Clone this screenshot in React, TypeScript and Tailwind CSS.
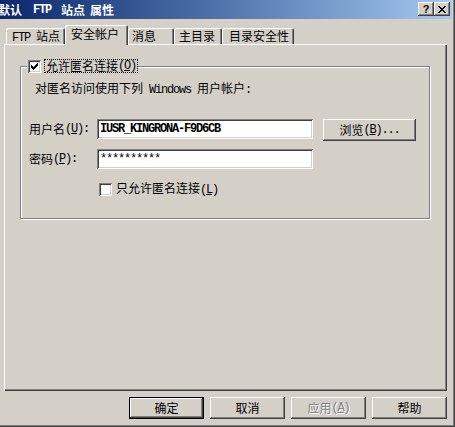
import clsx from 'clsx'
import type { ReactNode } from 'react'

const cjk = "font-['Noto_Sans_CJK_SC',sans-serif]"
const mono = "font-['Liberation_Mono','Noto_Sans_CJK_SC',monospace] text-[12px] tracking-[-1.2px]"
const raised =
  'shadow-[inset_-1px_-1px_0_#404040,inset_1px_1px_0_#ffffff,inset_-2px_-2px_0_#808080,inset_2px_2px_0_#d4d0c8]'
const sunken =
  'shadow-[inset_1px_1px_0_#808080,inset_-1px_-1px_0_#ffffff,inset_2px_2px_0_#404040,inset_-2px_-2px_0_#d4d0c8]'

// latin runs use a 6px monospace like the old bitmap font
const L = ({ children, className }: { children: ReactNode; className?: string }) => (
  <span className={clsx(mono, className)}>{children}</span>
)

const CHECK = [
  [2, 3],
  [3, 3],
  [4, 3],
  [3, 3],
  [2, 3],
  [1, 3],
  [0, 3],
]

const CLOSE = ['11000011', '01100110', '00111100', '00011000', '00111100', '01100110', '11000011']

function Check({ checked }: { checked?: boolean }) {
  return (
    <span className={clsx('flex h-[13px] w-[13px] shrink-0 bg-white', sunken)}>
      {checked && (
        <svg width="13" height="13" shapeRendering="crispEdges">
          {CHECK.map(([y, h], i) => (
            <rect key={i} x={3 + i} y={3 + y} width="1" height={h} fill="#000" />
          ))}
        </svg>
      )}
    </span>
  )
}

function Btn({
  children,
  def,
  disabled,
  className,
}: {
  children: ReactNode
  def?: boolean
  disabled?: boolean
  className?: string
}) {
  return (
    <div
      className={clsx(
        'flex h-[22px] w-[75px] shrink-0 items-center justify-center bg-[#d4d0c8]',
        raised,
        def && 'border border-black',
        disabled && 'text-[#808080] [text-shadow:1px_1px_0_#ffffff]',
        className,
      )}
    >
      {children}
    </div>
  )
}

function CapBtn({ children }: { children: ReactNode }) {
  return (
    <div className={clsx('flex h-[14px] w-[16px] items-center justify-center bg-[#d4d0c8] text-black', raised)}>
      {children}
    </div>
  )
}

function Tab({ label, w, pl, active }: { label: ReactNode; w: number; pl: number; active?: boolean }) {
  return (
    <div
      style={{ width: w, paddingLeft: pl }}
      className={clsx(
        'flex shrink-0 items-start rounded-t-[2px] bg-[#d4d0c8] shadow-[inset_1px_1px_0_#ffffff,inset_-1px_0_0_#404040,inset_-2px_0_0_#808080]',
        active ? 'relative z-10 -mb-[1px] h-[20px] pt-[3px]' : 'h-[16px] pt-[2px]',
      )}
    >
      {label}
    </div>
  )
}

export default function App() {
  return (
    <div
      className={clsx(
        'flex h-[427px] w-[455px] flex-col overflow-hidden bg-[#d4d0c8] text-[12px] leading-[12px] text-black shadow-[inset_-1px_-1px_0_#404040,inset_-2px_-2px_0_#808080]',
        cjk,
      )}
    >
      {/* Title bar */}
      <div className="mr-[3px] flex h-[19px] shrink-0 items-center bg-linear-to-r from-[#0c266c] to-[#a6caf0] pr-[2px] font-bold text-white">
        <span className="-ml-[2px]">默认</span>
        <L className="ml-[11px] font-bold">FTP</L>
        <span className="ml-[10px]">站点</span>
        <span className="ml-[5px]">属性</span>
        <div className="ml-auto flex self-start pt-[2px]">
          <CapBtn>
            <span className="font-['Liberation_Sans',sans-serif] text-[11px] leading-[11px] font-bold">?</span>
          </CapBtn>
          <CapBtn>
            <svg width="8" height="7" shapeRendering="crispEdges">
              {CLOSE.map((row, y) =>
                row
                  .split('')
                  .map((c, x) => (c === '1' ? <rect key={`${x}-${y}`} x={x} y={y} width="1" height="1" fill="#000" /> : null)),
              )}
            </svg>
          </CapBtn>
        </div>
      </div>

      {/* Tabs */}
      <div className="flex h-[25px] shrink-0 items-end pl-[6px]">
        <Tab
          w={59}
          pl={6}
          label={
            <span>
              <L>FTP </L>站点
            </span>
          }
        />
        <Tab w={63} pl={6} active label="安全帐户" />
        <Tab w={46} pl={4} label="消息" />
        <Tab w={48} pl={5} label="主目录" />
        <Tab w={72} pl={7} label="目录安全性" />
      </div>

      {/* Tab panel */}
      <div className="ml-[4px] flex h-[347px] w-[443px] shrink-0 flex-col shadow-[inset_1px_1px_0_#ffffff,inset_-1px_-1px_0_#404040,inset_-2px_-2px_0_#808080]">
        <div className="relative ml-[16px] mt-[22px] flex h-[153px] w-[410px] flex-col border border-[#808080] pl-[8px] shadow-[inset_1px_1px_0_#ffffff,1px_1px_0_#ffffff]">
          {/* group legend sits over the top edge */}
          <div className="absolute left-[6px] top-[-8px] flex h-[14px] items-center bg-[#d4d0c8] pl-[1px]">
            <Check checked />
            <span className="ml-[3px] flex h-[14px] items-center border border-dotted border-black px-[1px]">
              允许匿名连接
              <L>
                (<u>O</u>)
              </L>
            </span>
          </div>

          <div className="ml-[6px] mt-[15px]">
            对匿名访问使用下列<L> Windows </L>用户帐户<L>:</L>
          </div>

          <div className="mt-[23px] flex items-start">
            <div className="flex h-[20px] w-[68px] items-center">
              用户名
              <L>
                (<u>U</u>):
              </L>
            </div>
            <div className={clsx('flex h-[20px] w-[216px] items-center bg-white pl-[3px]', sunken)}>
              <L className="font-bold">IUSR_KINGRONA-F9D6CB</L>
            </div>
            <Btn className="ml-[10px] w-[93px]">
              浏览
              <L>
                (<u>B</u>)...
              </L>
            </Btn>
          </div>

          <div className="mt-[8px] flex items-start">
            <div className="flex h-[20px] w-[68px] items-center">
              密码
              <L>
                (<u>P</u>):
              </L>
            </div>
            <div className={clsx('flex h-[20px] w-[216px] items-center bg-white pl-[3px]', sunken)}>
              <L>**********</L>
            </div>
          </div>

          <div className="ml-[70px] mt-[13px] flex items-center">
            <Check />
            <span className="ml-[4px]">
              只允许匿名连接
              <L>
                (<u>L</u>)
              </L>
            </span>
          </div>
        </div>
      </div>

      {/* Dialog buttons */}
      <div className="mt-[6px] flex justify-end gap-[6px] pr-[8px]">
        <Btn def>确定</Btn>
        <Btn>取消</Btn>
        <Btn disabled>
          应用
          <L>
            (<u>A</u>)
          </L>
        </Btn>
        <Btn>帮助</Btn>
      </div>
    </div>
  )
}
